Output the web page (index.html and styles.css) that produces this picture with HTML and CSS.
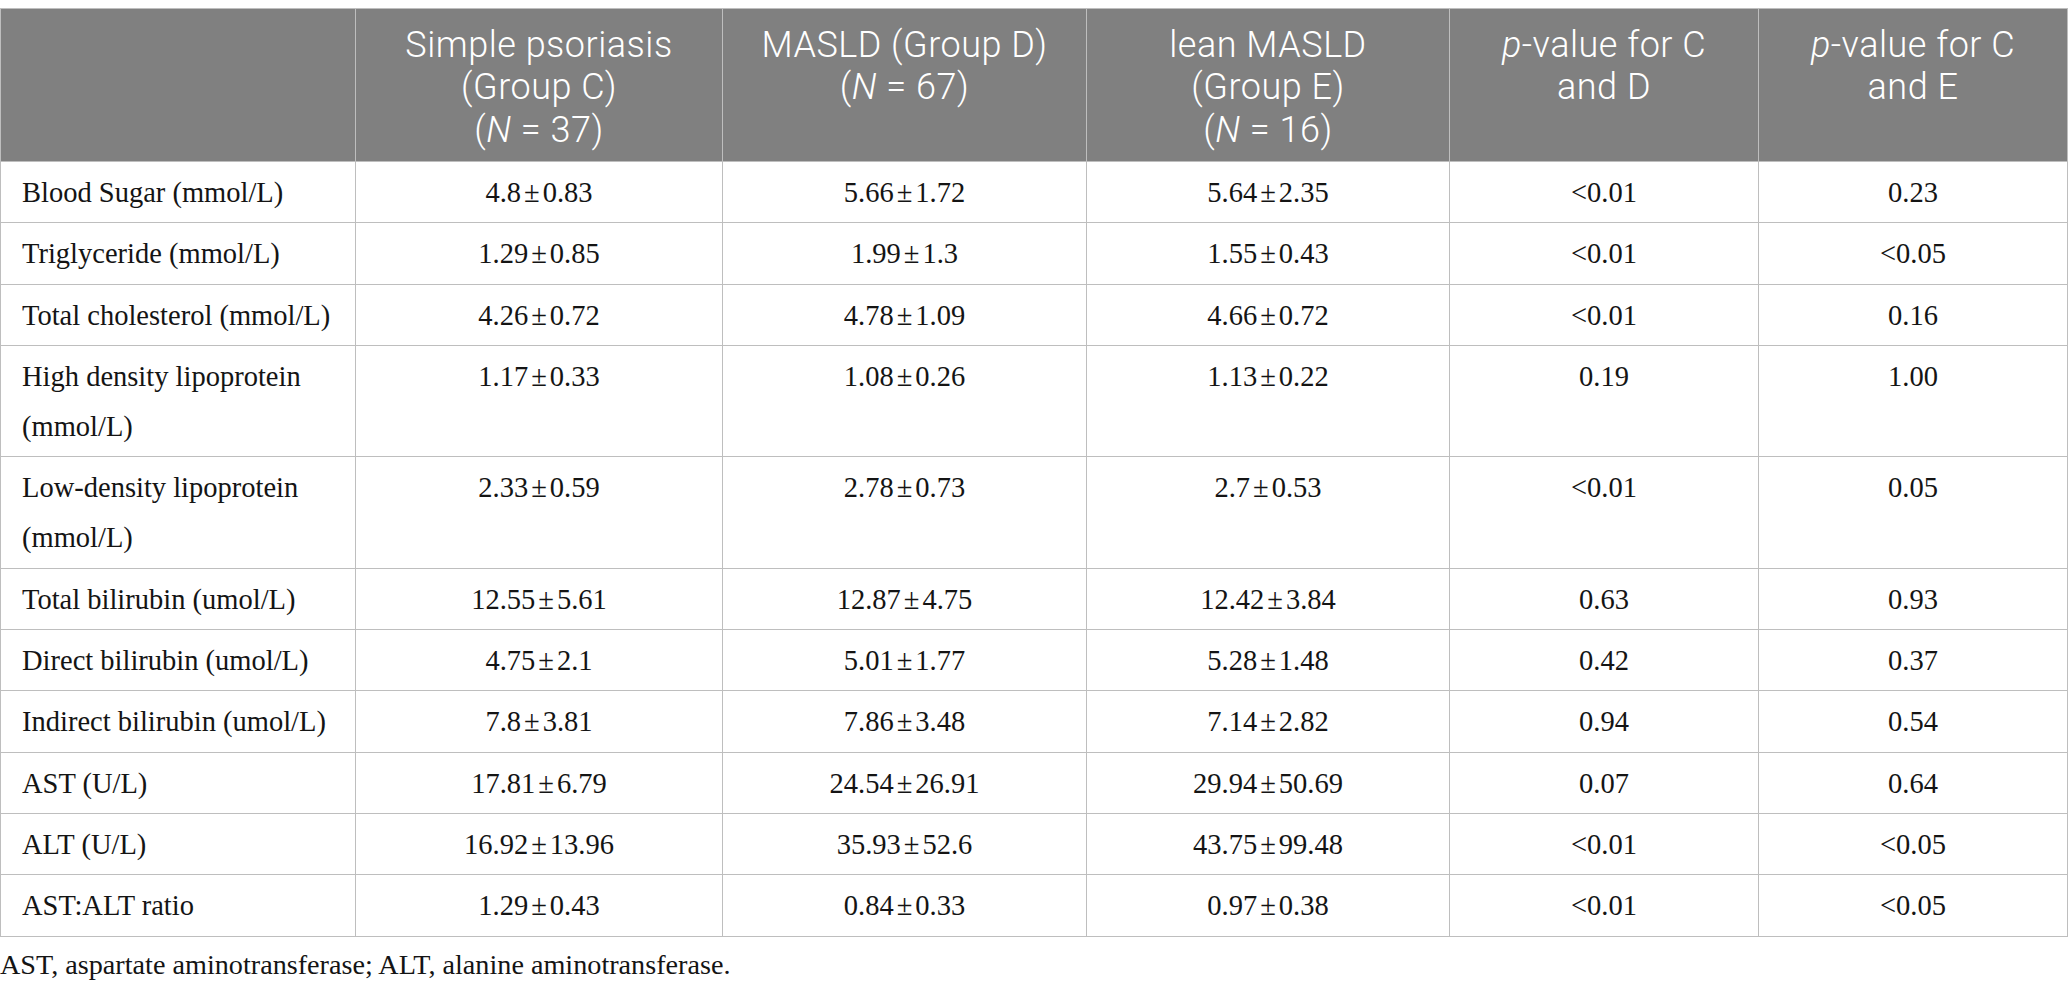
FILE: index.html
```html
<!DOCTYPE html>
<html lang="en">
<head>
    <meta charset="UTF-8">
    <meta name="viewport" content="width=device-width, initial-scale=1.0">
    <title>Table 3 - Biochemical parameters</title>
    <link rel="stylesheet" href="styles.css">
</head>
<body>
    <div class="table-wrap">
        <table class="stats">
            <colgroup>
                <col class="col-label">
                <col class="col-c">
                <col class="col-d">
                <col class="col-e">
                <col class="col-p">
                <col class="col-p">
            </colgroup>
            <thead>
                <tr>
                    <th></th>
                    <th>Simple psoriasis<br>(Group C)<br>(<i>N</i> = 37)</th>
                    <th>MASLD (Group D)<br>(<i>N</i> = 67)</th>
                    <th>lean MASLD<br>(Group E)<br>(<i>N</i> = 16)</th>
                    <th><i>p</i>-value for C<br>and D</th>
                    <th><i>p</i>-value for C<br>and E</th>
                </tr>
            </thead>
            <tbody>
                <tr>
                    <td class="label">Blood Sugar (mmol/L)</td>
                    <td>4.8<span class="pm">±</span>0.83</td>
                    <td>5.66<span class="pm">±</span>1.72</td>
                    <td>5.64<span class="pm">±</span>2.35</td>
                    <td>&lt;0.01</td>
                    <td>0.23</td>
                </tr>
                <tr>
                    <td class="label">Triglyceride (mmol/L)</td>
                    <td>1.29<span class="pm">±</span>0.85</td>
                    <td>1.99<span class="pm">±</span>1.3</td>
                    <td>1.55<span class="pm">±</span>0.43</td>
                    <td>&lt;0.01</td>
                    <td>&lt;0.05</td>
                </tr>
                <tr>
                    <td class="label">Total cholesterol (mmol/L)</td>
                    <td>4.26<span class="pm">±</span>0.72</td>
                    <td>4.78<span class="pm">±</span>1.09</td>
                    <td>4.66<span class="pm">±</span>0.72</td>
                    <td>&lt;0.01</td>
                    <td>0.16</td>
                </tr>
                <tr>
                    <td class="label">High density lipoprotein<br>(mmol/L)</td>
                    <td>1.17<span class="pm">±</span>0.33</td>
                    <td>1.08<span class="pm">±</span>0.26</td>
                    <td>1.13<span class="pm">±</span>0.22</td>
                    <td>0.19</td>
                    <td>1.00</td>
                </tr>
                <tr>
                    <td class="label">Low-density lipoprotein<br>(mmol/L)</td>
                    <td>2.33<span class="pm">±</span>0.59</td>
                    <td>2.78<span class="pm">±</span>0.73</td>
                    <td>2.7<span class="pm">±</span>0.53</td>
                    <td>&lt;0.01</td>
                    <td>0.05</td>
                </tr>
                <tr>
                    <td class="label">Total bilirubin (umol/L)</td>
                    <td>12.55<span class="pm">±</span>5.61</td>
                    <td>12.87<span class="pm">±</span>4.75</td>
                    <td>12.42<span class="pm">±</span>3.84</td>
                    <td>0.63</td>
                    <td>0.93</td>
                </tr>
                <tr>
                    <td class="label">Direct bilirubin (umol/L)</td>
                    <td>4.75<span class="pm">±</span>2.1</td>
                    <td>5.01<span class="pm">±</span>1.77</td>
                    <td>5.28<span class="pm">±</span>1.48</td>
                    <td>0.42</td>
                    <td>0.37</td>
                </tr>
                <tr>
                    <td class="label">Indirect bilirubin (umol/L)</td>
                    <td>7.8<span class="pm">±</span>3.81</td>
                    <td>7.86<span class="pm">±</span>3.48</td>
                    <td>7.14<span class="pm">±</span>2.82</td>
                    <td>0.94</td>
                    <td>0.54</td>
                </tr>
                <tr>
                    <td class="label">AST (U/L)</td>
                    <td>17.81<span class="pm">±</span>6.79</td>
                    <td>24.54<span class="pm">±</span>26.91</td>
                    <td>29.94<span class="pm">±</span>50.69</td>
                    <td>0.07</td>
                    <td>0.64</td>
                </tr>
                <tr>
                    <td class="label">ALT (U/L)</td>
                    <td>16.92<span class="pm">±</span>13.96</td>
                    <td>35.93<span class="pm">±</span>52.6</td>
                    <td>43.75<span class="pm">±</span>99.48</td>
                    <td>&lt;0.01</td>
                    <td>&lt;0.05</td>
                </tr>
                <tr>
                    <td class="label">AST:ALT ratio</td>
                    <td>1.29<span class="pm">±</span>0.43</td>
                    <td>0.84<span class="pm">±</span>0.33</td>
                    <td>0.97<span class="pm">±</span>0.38</td>
                    <td>&lt;0.01</td>
                    <td>&lt;0.05</td>
                </tr>
            </tbody>
        </table>
        <p class="table-note">AST, aspartate aminotransferase; ALT, alanine aminotransferase.</p>
    </div>
</body>
</html>
```

FILE: styles.css
```css
* {
    box-sizing: border-box;
    margin: 0;
    padding: 0;
}

body {
    background-color: #fff;
    font-family: 'Liberation Serif', 'Times New Roman', serif;
    color: #141414;
}

.table-wrap {
    padding-top: 8px;
}

.stats {
    width: 2068px;
    border-collapse: collapse;
    table-layout: fixed;
}

.col-label {
    width: 355px;
}

.col-c {
    width: 367px;
}

.col-d {
    width: 364px;
}

.col-e {
    width: 363px;
}

.col-p {
    width: 309px;
}

.stats th,
.stats td {
    border: 1px solid #bebebe;
    vertical-align: top;
    text-align: center;
}

.stats th {
    background-color: #808080;
    color: #fff;
    font-family: Roboto, 'Open Sans', sans-serif;
    font-weight: 300;
    font-size: 36px;
    line-height: 42.5px;
    letter-spacing: 0.5px;
    padding: 14.5px 12px 10px;
}

.stats td {
    font-size: 28.5px;
    line-height: 50px;
    padding: 6px 21px 4.34px;
}

.stats td.label {
    text-align: left;
}

.pm {
    margin: 0 3px;
}

.table-note {
    margin-top: 10px;
    font-size: 28.2px;
    line-height: 1.3;
    color: #141414;
}
```
